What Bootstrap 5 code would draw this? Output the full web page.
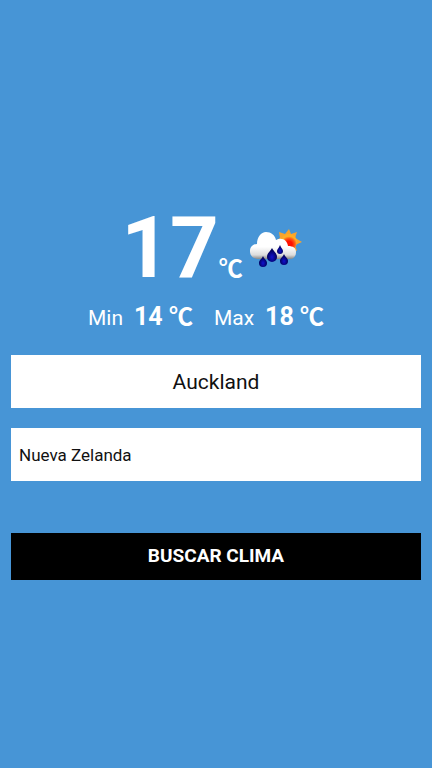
<!DOCTYPE html>
<html lang="es">
<head>
<meta charset="utf-8">
<meta name="viewport" content="width=device-width, initial-scale=1">
<title>Clima</title>
<link href="https://cdn.jsdelivr.net/npm/bootstrap@5.3.0/dist/css/bootstrap.min.css" rel="stylesheet">
<style>
body { background: #4795d6; font-family: Roboto, "Liberation Sans", sans-serif; }
.screen { padding: 0 11px; }
.now { line-height: 100px; padding: 10px 8px 0 0; }
.temp { font-size: 85px; font-weight: 700; }
.unit { font-family: "Noto Sans CJK JP", Roboto, sans-serif; font-size: 24px; line-height: 26px; font-weight: 700; }
.sky { width: 54px; height: 42px; margin: 4px 0 0 6px; }
.range { font-size: 21px; line-height: 30px; gap: 11px; margin: 4px 0 22px; padding-right: 20px; }
.range dt { font-weight: 400; }
.range dd { font-size: 25px; font-weight: 700; }
.range .low { margin-right: 10px; }
.field, .field:focus { height: 53px; background: #fff; border: 0; color: #111; }
.city { font-size: 21px; margin-bottom: 20px; }
.country { font-size: 17px; padding: 2px 8px 0; margin-bottom: 52px; }
.search { height: 47px; font-size: 19px; font-weight: 700; background: #000; color: #fff; }
</style>
</head>
<body>
<main class="screen min-vh-100 d-flex flex-column justify-content-center">
  <div class="now d-flex justify-content-center align-items-center text-white">
    <div class="d-flex align-items-baseline"><span class="temp">17</span><span class="unit">℃</span></div>
    <svg class="sky" viewBox="0 0 54 42" role="img" aria-label="Lluvia con sol">
      <defs>
        <linearGradient id="cloud" x1="0" y1="0" x2="0" y2="1"><stop offset=".55" stop-color="#fff"/><stop offset=".85" stop-color="#dcdcdc"/><stop offset="1" stop-color="#888"/></linearGradient>
        <radialGradient id="sun" cy=".65"><stop offset=".4" stop-color="#ff1200"/><stop offset=".75" stop-color="#ff5a18"/><stop offset="1" stop-color="#ffad24"/></radialGradient>
        <radialGradient id="drop" cx=".5" cy=".65"><stop offset="0" stop-color="#1212d0"/><stop offset="1" stop-color="#00005c"/></radialGradient>
      </defs>
      <path d="M40 0l2 5 6-2-2 6 7 4-7 3 2 6-5-2-7 1-6-6-2-4 3-2-1-6 6 2z" fill="#f9a32c"/>
      <circle cx="40" cy="13" r="8" fill="url(#sun)"/>
      <path d="M8 30C3 29 1 26 1 22c0-4 3-7 7-7C8 8 12 3 17 3c5 0 9 3 10 8 6-3 11 0 12 6 5 0 8 2 8 6 0 4-2 7-6 7z" fill="url(#cloud)"/>
      <g fill="url(#drop)">
        <path d="M23 19c2 4 5 5 5 9a5 5 0 0 1-10 0c0-4 3-5 5-9z"/>
        <path d="M31 16c1 3 3 4 3 6a3 3 0 0 1-6 0c0-2 2-3 3-6z"/>
        <path d="M14 27c1 3 4 4 4 7a4 4 0 0 1-8 0c0-3 3-4 4-7z"/>
        <path d="M35 25c1 3 4 4 4 7a4 4 0 0 1-8 0c0-3 3-4 4-7z"/>
      </g>
    </svg>
  </div>
  <dl class="range d-flex justify-content-center align-items-baseline text-white">
    <dt>Min</dt><dd class="low mb-0">14 <span class="unit">℃</span></dd>
    <dt>Max</dt><dd class="mb-0">18 <span class="unit">℃</span></dd>
  </dl>
  <form class="d-flex flex-column">
    <input class="field city form-control rounded-0 text-center" id="city" type="text" aria-label="Ciudad" value="Auckland">
    <select class="field country form-control rounded-0" id="country" aria-label="País"><option>Nueva Zelanda</option></select>
    <button class="search btn rounded-0 p-0 border-0 w-100" type="button">BUSCAR CLIMA</button>
  </form>
</main>
<script src="https://cdn.jsdelivr.net/npm/bootstrap@5.3.0/dist/js/bootstrap.bundle.min.js"></script>
</body>
</html>
